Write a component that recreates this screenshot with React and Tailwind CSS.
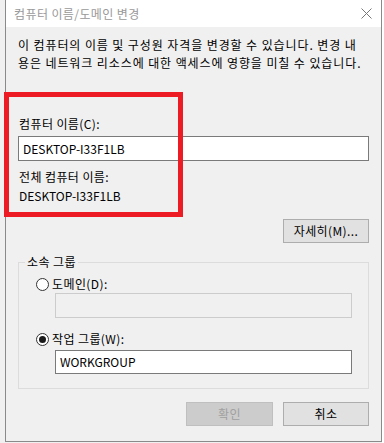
const font = { fontFamily: '"Noto Sans CJK KR", "Noto Sans", sans-serif' };

function Radio({ checked, label }) {
    return (
        <div className="flex items-center h-[18px] ml-[17px]">
            <span className="w-[13px] h-[13px] rounded-full border border-[#333333] bg-white flex items-center justify-center">
                {checked && <span className="w-[7px] h-[7px] rounded-full bg-[#1a1a1a]" />}
            </span>
            <span className="ml-[3px]">{label}</span>
        </div>
    );
}

// 컴퓨터 이름/도메인 변경 dialog
export default function App() {
    return (
        <div
            className="w-[384px] h-[443px] bg-[#f0f0f0] flex relative overflow-hidden text-[12px] leading-[18px] tracking-[0.4px] text-black"
            style={font}
        >
            <div className="w-[5px] shrink-0" />
            <div className="w-[377px] h-[442px] shrink-0 border-x border-b border-[#8a8a8a] flex flex-col">
                {/* title bar */}
                <div className="h-[27px] bg-white flex items-center justify-between pl-[8px] pr-[8px]">
                    <span className="text-[#999999]">컴퓨터 이름/도메인 변경</span>
                    <svg width="11" height="11" viewBox="0 0 11 11" className="mr-[1px]">
                        <path d="M0.5 0.5 L10.5 10.5 M10.5 0.5 L0.5 10.5" stroke="#777777" strokeWidth="1" />
                    </svg>
                </div>

                <div className="flex flex-col px-[12px]">
                    <div className="mt-[9px] whitespace-nowrap tracking-[0.9px]">
                        <div>이 컴퓨터의 이름 및 구성원 자격을 변경할 수 있습니다. 변경 내</div>
                        <div>용은 네트워크 리소스에 대한 액세스에 영향을 미칠 수 있습니다.</div>
                    </div>

                    <div className="mt-[43px] pl-[1px]">컴퓨터 이름(C):</div>
                    <div className="mt-[3px] h-[25px] bg-white border border-[#7a7a7a] flex items-center pl-[4px] tracking-normal">
                        DESKTOP-I33F1LB
                    </div>
                    <div className="mt-[7px] pl-[1px]">전체 컴퓨터 이름:</div>
                    <div className="mt-[1px] pl-[1px] tracking-normal">DESKTOP-I33F1LB</div>

                    <button className="mt-[14px] self-end w-[86px] h-[24px] bg-[#e1e1e1] border border-[#adadad] flex items-center justify-center">
                        자세히(M)...
                    </button>

                    <fieldset className="mt-[10px] border border-[#dcdcdc] pb-[14px]">
                        <legend className="ml-[6px] px-[2px]">소속 그룹</legend>
                        <div className="mt-[4px]">
                            <Radio label="도메인(D):" />
                        </div>
                        <div className="ml-[36px] mr-[16px] h-[25px] bg-[#f0f0f0] border border-[#cccccc]" />
                        <div className="mt-[12px]">
                            <Radio checked label="작업 그룹(W):" />
                        </div>
                        <div className="mt-[2px] ml-[36px] mr-[16px] h-[24px] bg-white border border-[#7a7a7a] flex items-center pl-[4px] tracking-normal">
                            WORKGROUP
                        </div>
                    </fieldset>

                    <div className="mt-[13px] flex justify-end gap-[10px]">
                        <button className="w-[87px] h-[24px] bg-[#cccccc] border border-[#bfbfbf] text-[#a0a0a0] flex items-center justify-center">
                            확인
                        </button>
                        <button className="w-[86px] h-[24px] bg-[#e1e1e1] border border-[#adadad] flex items-center justify-center">
                            취소
                        </button>
                    </div>
                </div>
            </div>
            <div className="w-[2px] shrink-0 bg-white" />

            {/* red highlight */}
            <div className="absolute left-[4px] top-[92px] w-[179px] h-[125px] border-[5px] border-[#ed1c24]" />
        </div>
    );
}
